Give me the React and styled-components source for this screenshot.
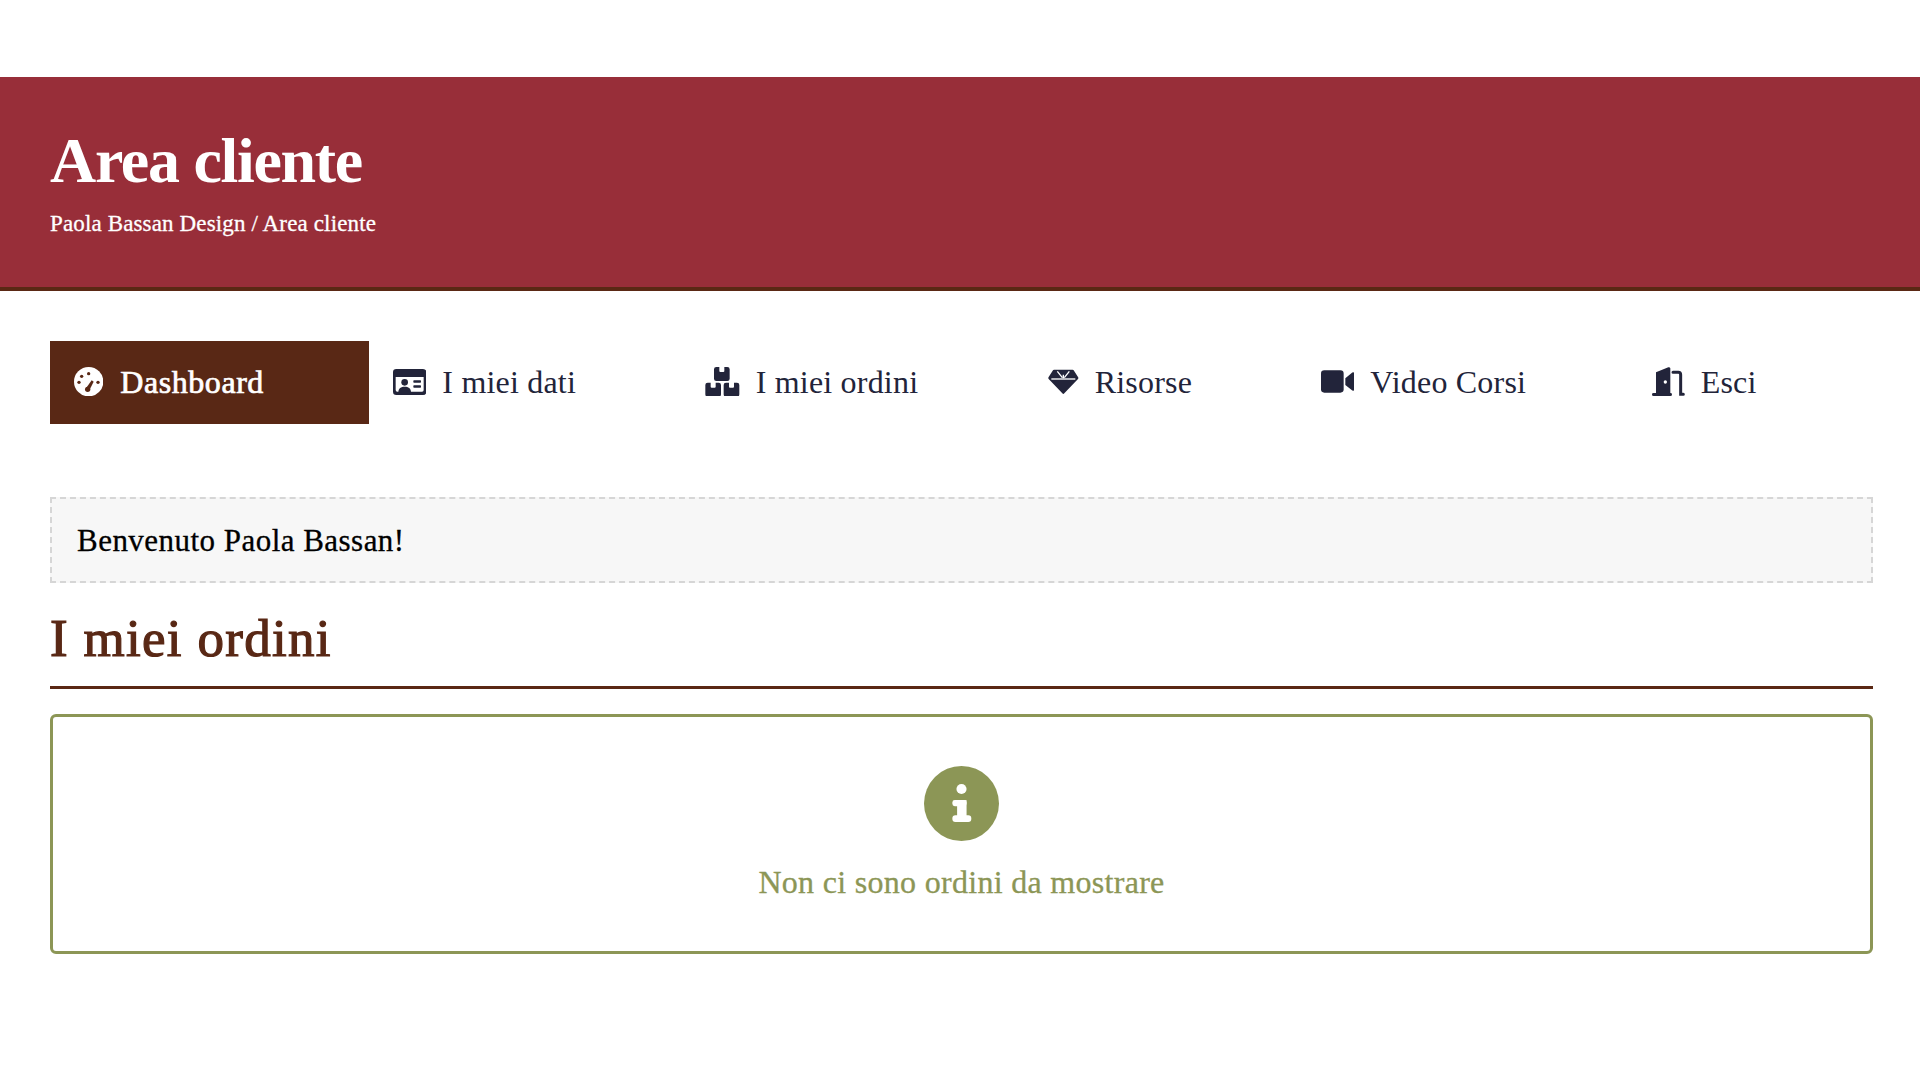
import React from "react";
import styled, { createGlobalStyle } from "styled-components";

const Global = createGlobalStyle`
  html, body { margin: 0; padding: 0; background: #fff; }
  body { font-family: "Liberation Serif", "Times New Roman", serif; }
`;

const Page = styled.div`
  padding-top: 77px;
  min-height: 1003px;
`;

const Hero = styled.header`
  height: 214px;
  box-sizing: border-box;
  background: #982e39;
  border-bottom: 4px solid #5a2814;
  padding: 47px 50px 0;
  color: #fff;
`;

const Title = styled.h1`
  margin: 0;
  font-size: 64px;
  line-height: 74px;
  font-weight: 700;
  letter-spacing: -1.3px;
`;

const Crumb = styled.div`
  margin-top: 11px;
  font-size: 23px;
  line-height: 30px;
  letter-spacing: 0.14px;
  -webkit-text-stroke: 0.3px #fff;
`;

const Main = styled.main`
  padding: 50px 47px 0 50px;
`;

const Nav = styled.nav`
  display: grid;
  grid-template-columns: 319px 312px 343px 273px 331px 1fr;
  height: 83px;
`;

const NavItem = styled.a`
  display: flex;
  align-items: center;
  gap: ${(p) => (p.$active ? 17 : 16)}px;
  padding-left: 24px;
  font-size: 32px;
  letter-spacing: ${(p) => (p.$active ? 0.55 : 0.2)}px;
  color: ${(p) => (p.$active ? "#fff" : "#22243a")};
  background: ${(p) => (p.$active ? "#592815" : "transparent")};
  -webkit-text-stroke: ${(p) => (p.$active ? "0.7px #fff" : "0")};
`;

const IconSvg = styled.svg`
  flex: none;
  display: block;
  margin-bottom: 2px;
`;

const Welcome = styled.div`
  margin-top: 73px;
  height: 86px;
  box-sizing: border-box;
  border: 2px dashed #d6d6d6;
  background: #f7f7f7;
  padding: 2px 25px 0;
  display: flex;
  align-items: center;
  color: #000;
  font-size: 31px;
  letter-spacing: 0.47px;
  -webkit-text-stroke: 0.3px #000;
`;

const Heading = styled.h2`
  margin: 0;
  height: 106px;
  box-sizing: border-box;
  padding-top: 25px;
  border-bottom: 3px solid #5a2814;
  color: #592815;
  font-size: 53px;
  line-height: 60px;
  font-weight: 400;
  letter-spacing: 1.3px;
  -webkit-text-stroke: 1.2px #592815;
`;

const Notice = styled.section`
  margin-top: 25px;
  height: 240px;
  box-sizing: border-box;
  border: 3px solid #8c9656;
  border-radius: 6px;
  padding-top: 49px;
  display: flex;
  flex-direction: column;
  align-items: center;
  color: #8c9656;
`;

const NoticeText = styled.p`
  margin: 23px 0 0;
  font-size: 32px;
  line-height: 36px;
  letter-spacing: 0.3px;
  -webkit-text-stroke: 0.3px #8c9656;
`;

const Icon = ({ x, y, w, h, children }) => (
  <IconSvg width={w / 3} height={h / 3} viewBox={`${x} ${y} ${w} ${h}`} fill="currentColor" aria-hidden="true">
    {children}
  </IconSvg>
);

const GaugeIcon = () => (
  <Icon x={44} y={46} w={88} h={88}>
    <circle cx="88" cy="90" r="44" />
    <g fill="#592815">
      <circle cx="88" cy="66" r="5" />
      <circle cx="67" cy="74" r="5" />
      <circle cx="59" cy="92" r="5" />
      <circle cx="116" cy="92" r="5" />
      <circle cx="85" cy="113" r="8" />
      <path d="M80 110 L97 86 L103 90 L90 116 Z" />
    </g>
  </Icon>
);

const CardIcon = () => (
  <Icon x={40} y={54} w={100} h={78}>
    <rect x="40" y="54" width="100" height="78" rx="10" />
    <path d="M48 78 H132 V117 a5 5 0 0 1 -5 5 H53 a5 5 0 0 1 -5 -5 Z" fill="#fff" />
    <circle cx="75" cy="94" r="10" />
    <path d="M56 124 C56 112 64 107 75 107 C86 107 94 112 94 124 Z" />
    <rect x="101" y="88" width="23" height="7" rx="2" />
    <rect x="101" y="103" width="23" height="7" rx="2" />
  </Icon>
);

const Box = ({ x, y }) => (
  <path d={`M${x + 7} ${y} H${x + 16} V${y + 12} a3 3 0 0 0 3 3 H${x + 28} a3 3 0 0 0 3 -3 V${y} H${x + 40} a7 7 0 0 1 7 7 V${y + 35} a7 7 0 0 1 -7 7 H${x + 7} a7 7 0 0 1 -7 -7 V${y + 7} a7 7 0 0 1 7 -7 Z`} />
);

const BoxesIcon = () => (
  <Icon x={47} y={49} w={104} h={89}>
    <Box x={74} y={49} />
    <Box x={48} y={96} />
    <Box x={103} y={96} />
  </Icon>
);

const GemIcon = () => (
  <Icon x={54} y={58} w={92} h={76}>
    <path d="M72 60 H128 a4 4 0 0 1 3 2 L144 82 a5 5 0 0 1 0 6 L103 131 a4 4 0 0 1 -6 0 L56 88 a5 5 0 0 1 0 -6 L69 62 a4 4 0 0 1 3 -2 Z" />
    <path d="M64 88 H136" stroke="#fff" strokeWidth="4" />
    <path d="M82 65 L97 84 M118 65 L103 84 M100 75 V86" stroke="#fff" strokeWidth="4" fill="none" />
  </Icon>
);

const CameraIcon = () => (
  <Icon x={64} y={59} w={100} h={69}>
    <rect x="64" y="60" width="68" height="67" rx="10" />
    <path d="M137 84 L157 67 a4 4 0 0 1 7 3 V117 a4 4 0 0 1 -7 3 L137 104 Z" />
  </Icon>
);

const DoorIcon = () => (
  <Icon x={64} y={49} w={98} h={90}>
    <path d="M76 65 L113 50 a4 4 0 0 1 6 4 V129 H76 Z" />
    <rect x="64" y="127" width="60" height="9" rx="4.5" />
    <circle cx="104" cy="94" r="5" fill="#fff" />
    <path d="M127 65 H143 a7 7 0 0 1 7 7 V131 H158" fill="none" stroke="currentColor" strokeWidth="9" strokeLinecap="round" />
  </Icon>
);

const BadgeSvg = styled.svg`
  display: block;
  flex: none;
`;

const InfoBadge = () => (
  <BadgeSvg width="75" height="75" viewBox="0 0 222 222" fill="currentColor" aria-hidden="true">
    <circle cx="111" cy="111" r="111" />
    <g fill="#fff">
      <circle cx="111" cy="68" r="15" />
      <rect x="84" y="101" width="42" height="18" rx="7" />
      <rect x="98" y="101" width="28" height="60" />
      <rect x="84" y="146" width="56" height="20" rx="9" />
    </g>
  </BadgeSvg>
);

const items = [
  { label: "Dashboard", Glyph: GaugeIcon, active: true },
  { label: "I miei dati", Glyph: CardIcon },
  { label: "I miei ordini", Glyph: BoxesIcon },
  { label: "Risorse", Glyph: GemIcon },
  { label: "Video Corsi", Glyph: CameraIcon },
  { label: "Esci", Glyph: DoorIcon },
];

export default function App() {
  return (
    <>
      <Global />
      <Page>
        <Hero>
          <Title>Area cliente</Title>
          <Crumb>Paola Bassan Design / Area cliente</Crumb>
        </Hero>
        <Main>
          <Nav>
            {items.map(({ label, Glyph, active }) => (
              <NavItem key={label} $active={active}>
                <Glyph />
                {label}
              </NavItem>
            ))}
          </Nav>
          <Welcome>Benvenuto Paola Bassan!</Welcome>
          <Heading>I miei ordini</Heading>
          <Notice>
            <InfoBadge />
            <NoticeText>Non ci sono ordini da mostrare</NoticeText>
          </Notice>
        </Main>
      </Page>
    </>
  );
}
